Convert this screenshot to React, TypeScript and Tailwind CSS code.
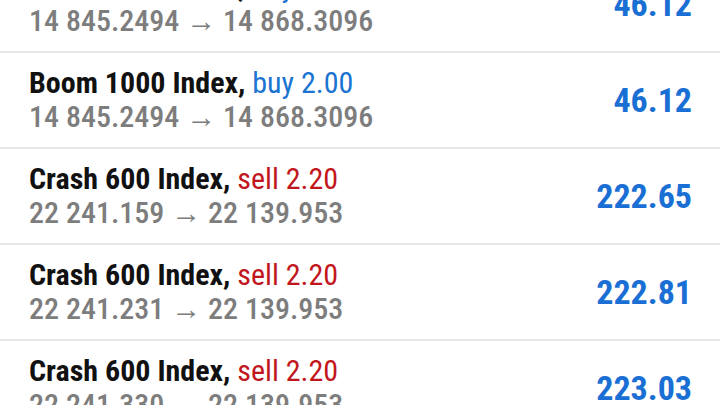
type Deal = {
  symbol: string;
  side: "buy" | "sell";
  volume: string;
  open: string;
  close: string;
  profit: string;
};

const deals: Deal[] = [
  { symbol: "Boom 1000 Index", side: "buy", volume: "2.00", open: "14 845.2494", close: "14 868.3096", profit: "46.12" },
  { symbol: "Boom 1000 Index", side: "buy", volume: "2.00", open: "14 845.2494", close: "14 868.3096", profit: "46.12" },
  { symbol: "Crash 600 Index", side: "sell", volume: "2.20", open: "22 241.159", close: "22 139.953", profit: "222.65" },
  { symbol: "Crash 600 Index", side: "sell", volume: "2.20", open: "22 241.231", close: "22 139.953", profit: "222.81" },
  { symbol: "Crash 600 Index", side: "sell", volume: "2.20", open: "22 241.330", close: "22 139.953", profit: "223.03" },
];

function DealRow({ deal }: { deal: Deal }) {
  return (
    <div className="flex h-[96px] items-center justify-between border-b-2 border-[#e8e8e8] pl-[29px] pr-[28px]">
      <div className="text-[30px] leading-[34px]">
        <div className="whitespace-nowrap">
          <span className="font-bold text-[#111111]">{deal.symbol},</span>{" "}
          <span className={deal.side === "buy" ? "text-[#1b74d1]" : "text-[#c2161d]"}>
            {deal.side} {deal.volume}
          </span>
        </div>
        <div className="whitespace-nowrap font-medium text-[#7d7d7d]">
          {deal.open} → {deal.close}
        </div>
      </div>
      <div className="text-[34px] font-bold leading-none text-[#1a6fd4]">{deal.profit}</div>
    </div>
  );
}

export default function App() {
  return (
    <div className="h-[405px] w-[720px] overflow-hidden bg-white font-['Roboto_Condensed','Roboto',sans-serif] font-stretch-condensed">
      <div className="-mt-[43px]">
        {deals.map((deal, index) => (
          <DealRow key={`${index}-${deal.profit}`} deal={deal} />
        ))}
      </div>
    </div>
  );
}
